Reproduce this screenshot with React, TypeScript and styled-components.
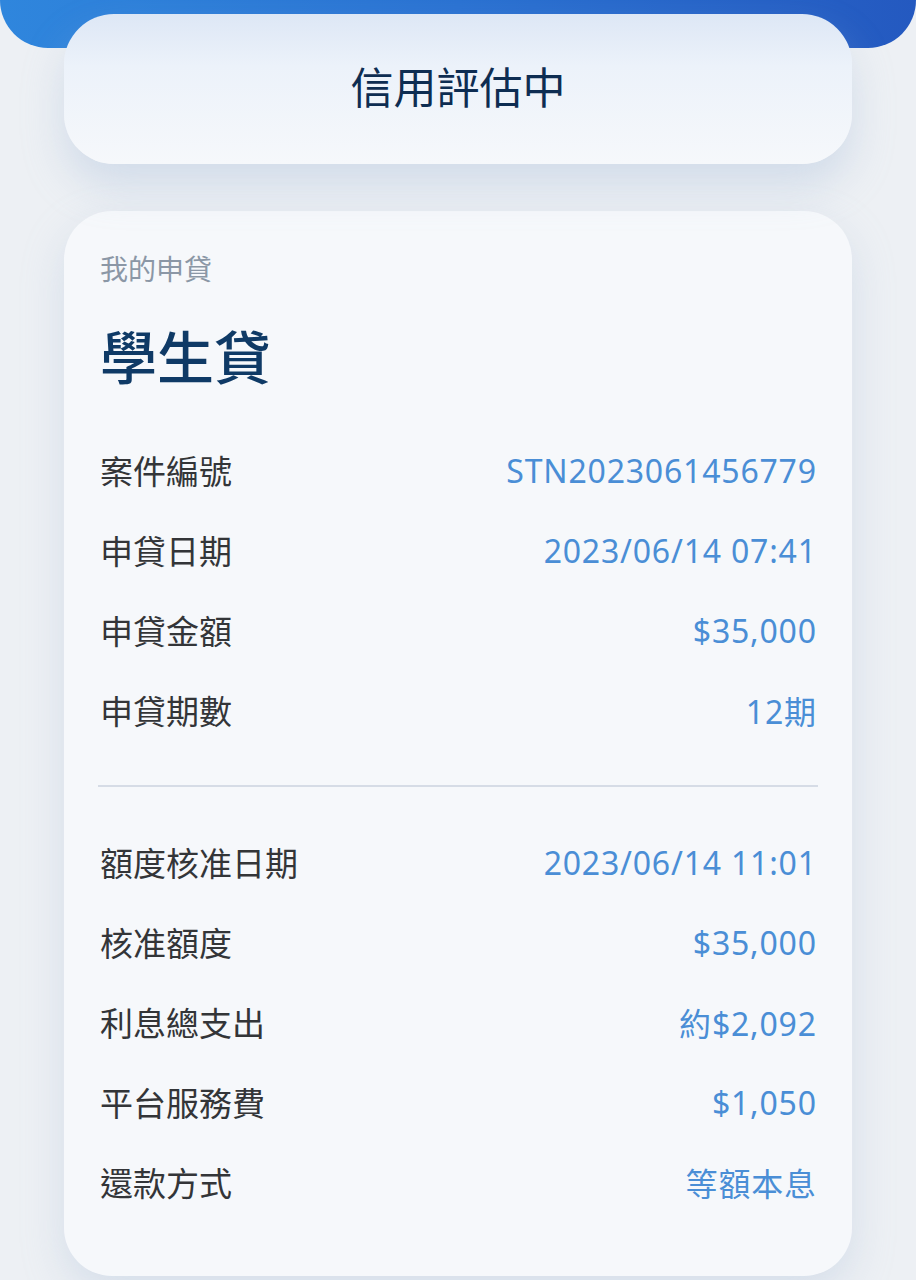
import styled, { createGlobalStyle } from "styled-components";

const GlobalStyle = createGlobalStyle`
  html, body {
    margin: 0;
    padding: 0;
    background: #edf0f4;
    font-family: "Noto Sans", "Noto Sans CJK TC", sans-serif;
  }
`;

type Row = { label: string; value: string };

const applyRows: Row[] = [
  { label: "案件編號", value: "STN2023061456779" },
  { label: "申貸日期", value: "2023/06/14 07:41" },
  { label: "申貸金額", value: "$35,000" },
  { label: "申貸期數", value: "12期" },
];

const approveRows: Row[] = [
  { label: "額度核准日期", value: "2023/06/14 11:01" },
  { label: "核准額度", value: "$35,000" },
  { label: "利息總支出", value: "約$2,092" },
  { label: "平台服務費", value: "$1,050" },
  { label: "還款方式", value: "等額本息" },
];

const App = () => {
  return (
    <Page>
      <GlobalStyle />
      <BlueBand />
      <StatusCard>
        <StatusText>信用評估中</StatusText>
      </StatusCard>
      <DetailCard>
        <Caption>我的申貸</Caption>
        <LoanTitle>學生貸</LoanTitle>
        {applyRows.map((r) => (
          <InfoRow key={r.label}>
            <Label>{r.label}</Label>
            <Value>{r.value}</Value>
          </InfoRow>
        ))}
        <Divider />
        {approveRows.map((r) => (
          <InfoRow key={r.label}>
            <Label>{r.label}</Label>
            <Value>{r.value}</Value>
          </InfoRow>
        ))}
      </DetailCard>
    </Page>
  );
};

const Page = styled.main`
  display: flex;
  flex-direction: column;
  align-items: center;
  min-height: 1280px;
  overflow: hidden;
`;
const BlueBand = styled.div`
  align-self: stretch;
  height: 48px;
  background: linear-gradient(90deg, #2f86dd 0%, #2a72d2 50%, #2459c0 100%);
  border-radius: 0 0 50px 50px;
`;
const StatusCard = styled.section`
  position: relative;
  box-sizing: border-box;
  width: 788px;
  height: 150px;
  margin-top: -34px;
  display: flex;
  align-items: center;
  justify-content: center;
  padding-bottom: 8px;
  border-radius: 50px;
  background: linear-gradient(180deg, #dde7f5 0%, #ecf2fa 35%, #f6f8fb 100%);
  box-shadow: 0 22px 40px rgba(160, 182, 214, 0.35);
`;
const StatusText = styled.h1`
  margin: 0;
  font-family: "Noto Sans CJK TC", sans-serif;
  font-size: 43px;
  font-weight: 400;
  color: #0e2d52;
`;
const DetailCard = styled.section`
  box-sizing: border-box;
  width: 788px;
  margin-top: 47px;
  padding: 39px 36px 54px;
  border-radius: 48px;
  background: #f6f8fb;
  box-shadow: 0 16px 40px rgba(170, 188, 214, 0.35);
`;
const Caption = styled.p`
  margin: 0;
  font-family: "Noto Sans CJK TC", sans-serif;
  font-size: 28px;
  line-height: 36px;
  color: #8b97a6;
`;
const LoanTitle = styled.h2`
  margin: 30px 0 38px;
  font-family: "Noto Sans CJK TC", sans-serif;
  font-size: 57px;
  line-height: 76px;
  font-weight: 500;
  color: #0f3a66;
`;
const InfoRow = styled.div`
  display: flex;
  align-items: center;
  justify-content: space-between;
  height: 80px;
`;
const Label = styled.span`
  font-family: "Noto Sans CJK TC", sans-serif;
  font-size: 33px;
  color: #333538;
`;
const Value = styled.span`
  margin-right: -0.8px;
  font-family: "Noto Sans", "Noto Sans CJK TC", sans-serif;
  font-size: 32px;
  letter-spacing: 0.8px;
  color: #4a8ed6;
`;
const Divider = styled.hr`
  margin: 35px -2px;
  border: none;
  height: 2px;
  background: #d6dce6;
`;

export default App;
